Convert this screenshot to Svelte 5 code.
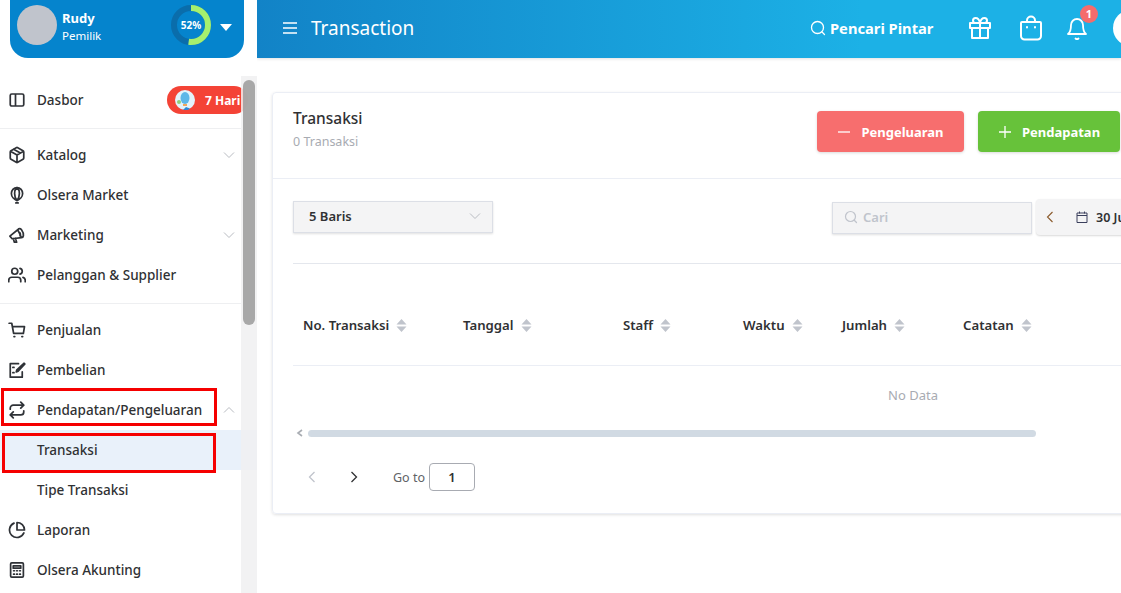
<script>
  const icons = {
    panel: 'M5 4h14a2 2 0 0 1 2 2v12a2 2 0 0 1-2 2H5a2 2 0 0 1-2-2V6a2 2 0 0 1 2-2zM10 4v16',
    box: 'M21 16V8a2 2 0 0 0-1-1.73l-7-4a2 2 0 0 0-2 0l-7 4A2 2 0 0 0 3 8v8a2 2 0 0 0 1 1.73l7 4a2 2 0 0 0 2 0l7-4A2 2 0 0 0 21 16zM3.3 7l8.7 5 8.7-5M12 22V12M7.5 4.2l9 5.2',
    balloon: 'M12 2C7.5 2 4.5 6 4.5 10c0 4 3.5 8 7.5 9.5 4-1.500 7.500-5.500 7.500-9.500 0-4-3-8-7.500-8zM12 2c-2.200 2-3.200 5-3.200 8 0 3.500 1.500 7.500 3.200 9.500 1.700-2 3.200-6 3.200-9.500 0-3-1-6-3.200-8zM10.500 22.500h3',
    megaphone: 'M2.500 13.500 13 5l5 10.500-12.500 1.500zM13 5c1.500-2 3.500-2 5 0s2.800 5.500 2.500 8c-.3 2-1.200 2.500-2.500 2.500M14.500 8.500c1.500-.8 3 3.500 1.500 4.500M7 17l1.500 4.500h3L10 16.500',
    users: 'M17 21v-2a4 4 0 0 0-4-4H5a4 4 0 0 0-4 4v2M9 3a4 4 0 1 0 0 8 4 4 0 0 0 0-8zM23 21v-2a4 4 0 0 0-3-3.870M16 3.130a4 4 0 0 1 0 7.750',
    cart: 'M1.500 3H5l2.500 13.500h13M6 7.500h16l-1.500 9M8 20.800h1M18.500 20.800h1',
    order: 'M14 3.500H3v18h16v-7M6.500 8.500h1.500M6.500 15.500h1.500M21.500 3l1 1-9 9.500-2.500 1 .8-2.700z',
    repeat: 'M17 1.500l4 4-4 4M3 11V9.500a4 4 0 0 1 4-4h14M7 22.500l-4-4 4-4M21 13v1.500a4 4 0 0 1-4 4H3',
    pie: 'M21.200 15.900A10 10 0 1 1 8 2.800M22 12A10 10 0 0 0 12 2v10z',
    calc: 'M5 2.500h14a1.500 1.500 0 0 1 1.500 1.500v16a1.500 1.500 0 0 1-1.500 1.500H5A1.500 1.500 0 0 1 3.500 20V4A1.500 1.500 0 0 1 5 2.500zM7 6.500h10v3H7zM7.500 13h1M11.500 13h1M15.500 13h1M7.500 17.500h1M11.500 17.500h1M15.500 17.500h1'
  };

  const groupTwo = [
    { label: 'Katalog', icon: 'box', chevron: 'down' },
    { label: 'Olsera Market', icon: 'balloon' },
    { label: 'Marketing', icon: 'megaphone', chevron: 'down' },
    { label: 'Pelanggan & Supplier', icon: 'users' }
  ];

  const groupThree = [
    { label: 'Penjualan', icon: 'cart' },
    { label: 'Pembelian', icon: 'order' },
    { label: 'Pendapatan/Pengeluaran', icon: 'repeat', chevron: 'up' },
    { label: 'Transaksi', active: true },
    { label: 'Tipe Transaksi' },
    { label: 'Laporan', icon: 'pie' },
    { label: 'Olsera Akunting', icon: 'calc' }
  ];

  const columns = ['No. Transaksi', 'Tanggal', 'Staff', 'Waktu', 'Jumlah', 'Catatan'];
</script>

{#snippet navRow(item)}
  <div class="nav-row" class:active={item.active}>
    <span class="nav-icon">
      {#if item.icon}
        <svg width="18" height="18" viewBox="0 0 24 24" fill="none" stroke="#2f3237" stroke-width="2.300" stroke-linecap="round" stroke-linejoin="round"><path d={icons[item.icon]} /></svg>
      {/if}
    </span>
    <span class="nav-label">{item.label}</span>
    {#if item.chevron}
      <svg class="nav-chevron" width="12" height="12" viewBox="0 0 12 12" fill="none" stroke="#b9bcc2" stroke-width="1"><path d={item.chevron === 'down' ? 'M1 3.500 6 8.500 11 3.500' : 'M1 8.500 6 3.500 11 8.500'} /></svg>
    {/if}
  </div>
{/snippet}

<div class="page">
  <aside class="sidebar">
    <div class="user-card">
      <div class="avatar"></div>
      <div class="user-text">
        <div class="user-name">Rudy</div>
        <div class="user-role">Pemilik</div>
      </div>
      <div class="donut">
        <svg width="40" height="40" viewBox="0 0 40 40" fill="none">
          <circle cx="20" cy="20" r="17" stroke="#0a6dab" stroke-width="6" />
          <circle cx="20" cy="20" r="17" stroke="#a6f06e" stroke-width="6" stroke-dasharray="55.500 107" transform="rotate(-90 20 20)" />
        </svg>
        <span>52%</span>
      </div>
      <div class="caret"></div>
    </div>

    <div class="nav-group first">
      <div class="nav-row">
        <span class="nav-icon">
          <svg width="18" height="18" viewBox="0 0 24 24" fill="none" stroke="#2f3237" stroke-width="2.300" stroke-linecap="round" stroke-linejoin="round"><path d={icons.panel} /></svg>
        </span>
        <span class="nav-label">Dasbor</span>
        <div class="trial">
          <svg width="20" height="20" viewBox="0 0 20 20">
            <circle cx="10" cy="10" r="10" fill="#e3f3fb" />
            <ellipse cx="10" cy="8" rx="4.500" ry="6" fill="#5db7e8" />
            <path d="M8 14h4v2H8z" fill="#f2a65a" />
            <circle cx="4" cy="12" r="2" fill="#8fd07a" />
            <path d="M8 20l3-3 4 1.500-2 1.500z" fill="#2f86d2" />
          </svg>
          <span>7 Hari</span>
        </div>
      </div>
    </div>

    <div class="nav-group">
      {#each groupTwo as item}
        {@render navRow(item)}
      {/each}
    </div>

    <div class="nav-group last">
      {#each groupThree as item}
        {@render navRow(item)}
      {/each}
    </div>

    <div class="scroll-track"><div class="scroll-thumb"></div></div>
    <div class="marker marker-parent"></div>
    <div class="marker marker-child"></div>
  </aside>

  <main class="main">
    <header class="topbar">
      <svg class="top-icon" width="18" height="18" viewBox="0 0 18 18" fill="none" stroke="#fff" stroke-width="1.500"><path d="M2 4h14M2 9h14M2 14h14" /></svg>
      <h1>Transaction</h1>
      <div class="smart-search">
        <svg width="16" height="16" viewBox="0 0 16 16" fill="none" stroke="#fff" stroke-width="1.300" stroke-linecap="round"><circle cx="7.500" cy="7.500" r="6" /><path d="M12 12l2.500 2.500" /></svg>
        <span>Pencari Pintar</span>
      </div>
      <svg class="top-icon gift" width="24" height="24" viewBox="0 0 24 24" fill="none" stroke="#fff" stroke-width="2" stroke-linecap="round" stroke-linejoin="round"><path d="M20 12v10H4V12M2 7h20v5H2zM12 22V7M12 7H7.500a2.500 2.500 0 0 1 0-5C11 2 12 7 12 7zM12 7h4.500a2.500 2.500 0 0 0 0-5C13 2 12 7 12 7z" /></svg>
      <svg class="top-icon bag" width="24" height="26" viewBox="0 0 24 26" fill="none" stroke="#fff" stroke-width="2" stroke-linecap="round" stroke-linejoin="round"><path d="M3 7h18a1 1 0 0 1 1 1v13a3.500 3.500 0 0 1-3.500 3.500h-13A3.500 3.500 0 0 1 2 21V8a1 1 0 0 1 1-1zM8 7V5.500a4 4 0 0 1 8 0V7M8 12v.5M16 12v.5" /></svg>
      <div class="bell">
        <svg width="24" height="26" viewBox="0 0 24 26" fill="none" stroke="#fff" stroke-width="1.800" stroke-linecap="round" stroke-linejoin="round"><path d="M18 10a6 6 0 0 0-12 0c0 7-3 9-3 9h18s-3-2-3-9zM10.500 23.500c.8.700 2.200.7 3 0" /></svg>
        <span class="badge">1</span>
      </div>
      <div class="top-avatar"></div>
    </header>

    <section class="card">
      <div class="card-head">
        <div>
          <h2>Transaksi</h2>
          <p>0 Transaksi</p>
        </div>
        <div class="actions">
          <button class="btn btn-out">
            <svg width="14" height="14" viewBox="0 0 14 14" stroke="#fff" stroke-width="1.300"><path d="M1 7h12" /></svg>
            Pengeluaran
          </button>
          <button class="btn btn-in">
            <svg width="14" height="14" viewBox="0 0 14 14" stroke="#fff" stroke-width="1.300"><path d="M1 7h12M7 1v12" /></svg>
            Pendapatan
          </button>
        </div>
      </div>

      <div class="card-body">
        <div class="filters">
          <div class="select">
            <span>5 Baris</span>
            <svg width="12" height="12" viewBox="0 0 12 12" fill="none" stroke="#b9bcc2" stroke-width="1"><path d="M1 3.500 6 8.500 11 3.500" /></svg>
          </div>
          <div class="search">
            <svg width="14" height="14" viewBox="0 0 14 14" fill="none" stroke="#c0c4cc" stroke-width="1.200" stroke-linecap="round"><circle cx="6.500" cy="6.500" r="5" /><path d="M10.500 10.500l2 2" /></svg>
            <span>Cari</span>
          </div>
          <div class="date-pill">
            <svg width="8" height="12" viewBox="0 0 8 12" fill="none" stroke="#8a5a2b" stroke-width="1.100"><path d="M6.500 1 1.500 6l5 5" /></svg>
            <svg class="cal" width="12" height="12" viewBox="0 0 12 12" fill="none" stroke="#3a3f5c" stroke-width="1"><path d="M1 2h10v9.500H1zM1 4.500h10M3.500.5v2M8.500.5v2" /></svg>
            <span>30 Jun 2023</span>
          </div>
        </div>

        <div class="table">
          <div class="table-head">
            {#each columns as col}
              <div class="th">
                {col}
                <svg width="11" height="13" viewBox="0 0 11 13" fill="#c0c4cc"><path d="M5.500 0 10.500 5.500H.5zM5.500 13 .5 7.500H10.500z" /></svg>
              </div>
            {/each}
          </div>
          <div class="no-data">No Data</div>
        </div>

        <div class="hscroll">
          <svg width="8" height="8" viewBox="0 0 8 8" fill="none" stroke="#a9adb3" stroke-width="1.600"><path d="M6 1 2 4l4 3" /></svg>
          <div class="hscroll-thumb"></div>
        </div>

        <div class="pager">
          <svg class="prev" width="8" height="12" viewBox="0 0 8 12" fill="none" stroke="#c0c4cc" stroke-width="1.300"><path d="M6.500 1 1.500 6l5 5" /></svg>
          <svg class="next" width="8" height="12" viewBox="0 0 8 12" fill="none" stroke="#303133" stroke-width="1.300"><path d="M1.500 1l5 5-5 5" /></svg>
          <span class="goto">Go to</span>
          <div class="page-input">1</div>
        </div>
      </div>
    </section>
  </main>
</div>

<style>
  :global(body) {
    margin: 0;
    background: #fff;
    font-family: "Noto Sans", sans-serif;
    color: #303133;
  }

  .page {
    display: grid;
    grid-template-columns: 257px 864px;
    height: 593px;
    overflow: hidden;
  }

  .sidebar {
    position: relative;
    height: 593px;
    overflow: hidden;
  }

  .user-card {
    display: flex;
    align-items: center;
    height: 58px;
    width: 234px;
    margin-left: 10px;
    padding-left: 7px;
    box-sizing: border-box;
    background: #0584cd;
    border-radius: 0 0 18px 18px;
    color: #fff;
  }

  .avatar {
    width: 40px;
    height: 40px;
    border-radius: 50%;
    background: #c0c4cc;
    margin-top: -8px;
  }

  .user-text {
    margin-left: 5px;
    width: 109px;
    margin-top: -7px;
  }

  .user-name {
    font-size: 13px;
    font-weight: 700;
    line-height: 20px;
  }

  .user-role {
    font-size: 11.5px;
    line-height: 16px;
  }

  .donut {
    position: relative;
    width: 40px;
    height: 40px;
    margin-top: -8px;
  }

  .donut span {
    position: absolute;
    inset: 0;
    display: flex;
    align-items: center;
    justify-content: center;
    font-size: 10px;
    font-weight: 700;
  }

  .caret {
    margin-left: 9px;
    margin-top: -4px;
    border-left: 6px solid transparent;
    border-right: 6px solid transparent;
    border-top: 7px solid #fff;
  }

  .nav-group {
    padding: 6px 0 8px;
    width: 241px;
    border-bottom: 1px solid #eeeff1;
  }

  .nav-group.first {
    padding-top: 22px;
  }

  .nav-group.last {
    border-bottom: none;
  }

  .nav-row {
    display: flex;
    align-items: center;
    height: 40px;
    font-size: 13.5px;
    font-weight: 500;
    color: #303133;
  }

  .nav-row.active {
    background: #e9f1fa;
    width: 257px;
  }

  .nav-icon {
    width: 18px;
    height: 18px;
    margin-left: 8px;
    margin-right: 11px;
    flex: none;
  }

  .nav-label {
    flex: 1;
    white-space: nowrap;
  }

  .nav-chevron {
    margin-right: 6px;
  }

  .trial {
    display: flex;
    align-items: center;
    flex: none;
    width: 81px;
    height: 28px;
    margin-right: -7px;
    padding-left: 8px;
    box-sizing: border-box;
    background: #f44336;
    border-radius: 14px;
    color: #fff;
    font-size: 12px;
    font-weight: 700;
  }

  .trial span {
    margin-left: 10px;
  }

  .scroll-track {
    position: absolute;
    left: 241px;
    top: 76px;
    width: 16px;
    height: 517px;
    background: rgba(240, 240, 241, 0.85);
  }

  .scroll-thumb {
    margin: 4px 2px 0;
    height: 245px;
    border-radius: 6px;
    background: rgba(160, 160, 160, 0.9);
  }

  .marker {
    position: absolute;
    box-sizing: border-box;
    border: 3px solid #f50000;
  }

  .marker-parent {
    left: 1px;
    top: 388px;
    width: 216px;
    height: 38px;
  }

  .marker-child {
    left: 2px;
    top: 433px;
    width: 214px;
    height: 40px;
  }

  .main {
    min-width: 0;
    overflow: hidden;
  }

  .topbar {
    display: flex;
    align-items: center;
    height: 58px;
    padding: 0 0 3px 24px;
    box-sizing: border-box;
    background: linear-gradient(90deg, #1283c7, #1cb1e6 70%);
    box-shadow: 0 1px 3px rgba(0, 0, 0, 0.12);
    color: #fff;
  }

  .topbar h1 {
    flex: none;
    margin: 0 0 0 12px;
    width: 499px;
    font-size: 19px;
    font-weight: 400;
  }

  .smart-search {
    display: flex;
    align-items: center;
    gap: 4px;
    width: 158px;
    font-size: 14.7px;
    font-weight: 700;
    flex: none;
  }

  .top-icon {
    flex: none;
  }

  .bag {
    margin-left: 27px;
  }

  .bell {
    position: relative;
    flex: none;
    margin-left: 22px;
    height: 26px;
  }

  .badge {
    position: absolute;
    left: 15px;
    top: -10px;
    width: 18px;
    height: 18px;
    border-radius: 50%;
    background: #f56c6c;
    font-size: 11px;
    font-weight: 700;
    line-height: 18px;
    text-align: center;
  }

  .top-avatar {
    flex: none;
    width: 36px;
    height: 36px;
    margin-left: 24px;
    border-radius: 50%;
    background: #fff;
  }

  .card {
    width: 869px;
    margin: 34px 0 0 15px;
    border: 1px solid #ebeef5;
    border-radius: 4px;
    box-shadow: 0 1px 3px rgba(0, 0, 0, 0.12);
    height: 422px;
    box-sizing: border-box;
  }

  .card-head {
    display: flex;
    justify-content: space-between;
    height: 85px;
    padding: 0 20px;
    border-bottom: 1px solid #ebeef5;
  }

  .card-head h2 {
    margin: 15px 0 0;
    font-size: 15.5px;
    font-weight: 500;
    line-height: 21px;
  }

  .card-head p {
    margin: 3px 0 0;
    font-size: 12.5px;
    line-height: 20px;
    color: #a8abb2;
  }

  .actions {
    display: flex;
    gap: 14px;
    margin-top: 18px;
  }

  .btn {
    display: flex;
    align-items: center;
    justify-content: center;
    gap: 10px;
    height: 41px;
    border: none;
    border-radius: 4px;
    box-shadow: 0 1px 3px rgba(0, 0, 0, 0.15);
    color: #fff;
    font-family: inherit;
    font-size: 13px;
    font-weight: 700;
  }

  .btn-out {
    width: 147px;
    background: #f76e6e;
  }

  .btn-in {
    width: 142px;
    background: #67c23a;
  }

  .card-body {
    padding: 21px 0 0 20px;
  }

  .filters {
    display: flex;
    align-items: flex-start;
    height: 35px;
    width: 1000px;
    margin-bottom: 28px;
  }

  .select {
    display: flex;
    align-items: center;
    justify-content: space-between;
    width: 200px;
    height: 32px;
    margin-top: 1px;
    padding: 0 11px 2px 15px;
    box-sizing: border-box;
    background: #f4f4f5;
    border: 1px solid #dcdfe6;
    box-shadow: 0 1px 2px rgba(0, 0, 0, 0.12);
    font-size: 13px;
    font-weight: 600;
  }

  .search {
    display: flex;
    align-items: center;
    gap: 5px;
    width: 200px;
    height: 32px;
    margin: 2px 0 0 339px;
    padding: 0 0 2px 11px;
    box-sizing: border-box;
    background: #f4f4f5;
    border: 1px solid #dcdfe6;
    box-shadow: 0 1px 2px rgba(0, 0, 0, 0.12);
    font-size: 13px;
    font-weight: 600;
    color: #c0c4cc;
  }

  .date-pill {
    display: flex;
    align-items: center;
    width: 240px;
    height: 36px;
    margin: -1px 0 0 4px;
    padding-left: 10px;
    box-sizing: border-box;
    background: #f4f4f5;
    border-radius: 4px;
    box-shadow: 0 1px 2px rgba(0, 0, 0, 0.15);
    font-size: 12.5px;
    font-weight: 600;
    white-space: nowrap;
  }

  .cal {
    margin: 0 8px 0 22px;
  }

  .table {
    width: 828px;
    overflow: hidden;
    border-top: 1px solid #e4e7ed;
  }

  .table-head {
    display: grid;
    grid-template-columns: 160px 160px 120px 99px 121px 200px 380px;
    align-items: center;
    width: 1240px;
    height: 80px;
    margin-top: 21px;
    border-bottom: 1px solid #ebeef5;
  }

  .th {
    display: flex;
    align-items: center;
    gap: 7px;
    padding-left: 10px;
    font-size: 13.2px;
    font-weight: 600;
    white-space: nowrap;
  }

  .no-data {
    width: 1240px;
    height: 58px;
    line-height: 58px;
    text-align: center;
    font-size: 13px;
    color: #a8abb2;
  }

  .hscroll {
    display: flex;
    align-items: center;
    gap: 4px;
    height: 8px;
    margin: 5px 0 0 3px;
  }

  .hscroll-thumb {
    width: 728px;
    height: 7px;
    border-radius: 4px;
    background: #d1dae3;
  }

  .pager {
    display: flex;
    align-items: center;
    height: 28px;
    margin-top: 26px;
    padding-left: 15px;
  }

  .next {
    margin-left: 34px;
  }

  .goto {
    margin-left: 35px;
    font-size: 12.5px;
    color: #606266;
  }

  .page-input {
    width: 46px;
    height: 28px;
    margin-left: 4px;
    box-sizing: border-box;
    border: 1px solid #a8abb2;
    border-radius: 4px;
    line-height: 26px;
    text-align: center;
    font-size: 13px;
    font-weight: 600;
  }
</style>
